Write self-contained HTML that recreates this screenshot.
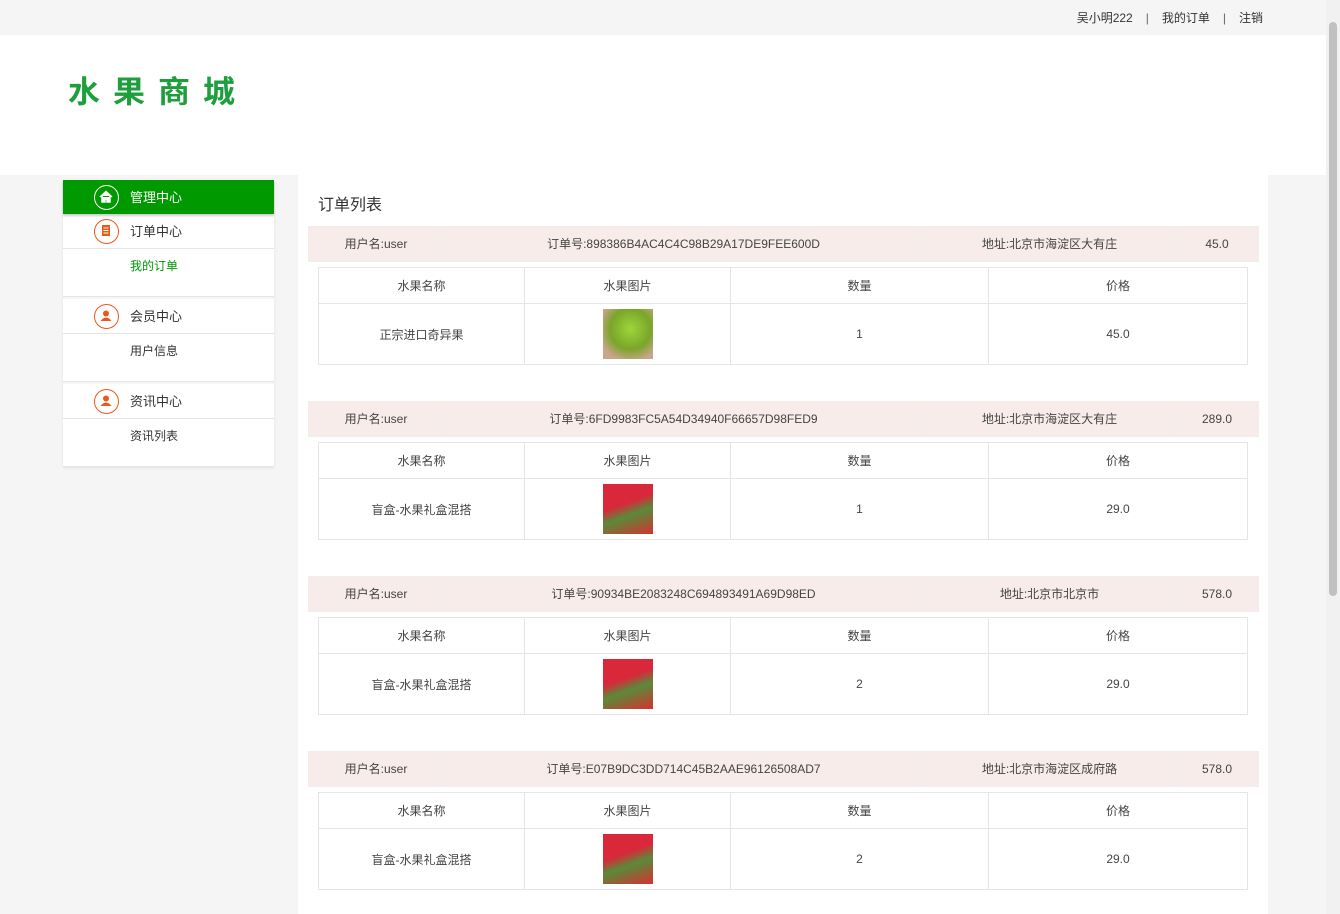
<!DOCTYPE html>
<html><head><meta charset="utf-8"><style>
*{margin:0;padding:0;box-sizing:border-box}
body{width:1340px;height:914px;overflow:hidden;background:#f5f5f5;font-family:"Liberation Sans","Noto Sans CJK SC",sans-serif;font-size:12px;color:#444;position:relative}
.top{height:35px;background:#f5f5f5;position:relative}
.top .l{position:absolute;right:77px;top:9px;font-size:12px;color:#333}
.top .l span{margin:0 13px;color:#666}
.hdr{height:140px;background:#fff;position:relative}
.logo{position:absolute;left:68px;top:31px;font-size:32px;font-weight:bold;color:#1e9e3c;letter-spacing:13px;font-family:"Noto Sans CJK SC",sans-serif;line-height:48px;transform:scaleY(0.95)}
.side{position:absolute;left:63px;top:180px;width:211px;background:#fff;box-shadow:0 1px 3px rgba(0,0,0,.08)}
.it{height:35px;position:relative;border-bottom:1px solid #e5e5e5;font-size:13px;color:#333;line-height:35px;padding-left:67px}
.it.g{background:#009900;color:#fff;border-bottom:none;height:34px;box-shadow:0 2px 2px rgba(0,0,0,.2)}
.ic{position:absolute;left:31px;top:5px;width:25px;height:25px;border-radius:50%;border:1.5px solid #e85a1a;}
.it.g .ic{border-color:#fff}
.sub{height:48px;padding:8px 0 0 67px;font-size:12px;color:#333;border-bottom:1px solid #e5e5e5}
.main{position:absolute;left:298px;top:175px;width:970px;height:739px;background:#fff}
.ttl{position:absolute;left:20px;top:16px;font-size:16px;color:#333}
.blk{position:absolute;left:10px;width:951px}
.hr{height:36px;background:#f7ece9;border:1px solid #eee;display:flex;font-size:12px;color:#444;line-height:34px}
.hr div{text-align:center;border-right:1px solid #eee}
table{position:absolute;left:10px;top:41px;width:930px;border-collapse:collapse;font-size:12px;color:#444}
td{border:1px solid #e5e5e5;text-align:center}
tr.h td{height:36px}
tr.b td{height:61px}
.pic{width:50px;height:50px;display:inline-block;vertical-align:middle}
.sb{position:absolute;right:0;top:0;width:14px;height:914px;background:#f1f1f1}
.sb div{position:absolute;left:3px;top:22px;width:8px;height:574px;background:#c1c1c1;border-radius:4px}
</style></head><body>
<div class="top"><div class="l">吴小明222<span>|</span>我的订单<span>|</span>注销</div></div>
<div class="hdr"><div class="logo">水果商城</div></div>
<div class="side">
<div class="it g"><div class="ic"><svg width="22" height="22" viewBox="0 0 22 22"><path d="M5 11 L11 5.5 L17 11 M7 10 V16 H10 V13 H12 V16 H15 V10" fill="#fff" stroke="#fff" stroke-width="1.5"/></svg></div>管理中心</div>
<div class="it"><div class="ic"><svg width="22" height="22" viewBox="0 0 22 22"><rect x="7" y="5" width="8" height="11" fill="#e85a1a"/><path d="M8.5 8h5M8.5 10.5h5M8.5 13h5" stroke="#fff" stroke-width="1"/></svg></div>订单中心</div>
<div class="sub" style="color:#009900">我的订单</div>
<div style="height:2px;background:#f5f5f5"></div>
<div class="it"><div class="ic"><svg width="22" height="22" viewBox="0 0 22 22"><circle cx="11" cy="8.5" r="3" fill="#e85a1a"/><path d="M5.5 16 Q11 9 16.5 16Z" fill="#e85a1a"/></svg></div>会员中心</div>
<div class="sub">用户信息</div>
<div style="height:2px;background:#f5f5f5"></div>
<div class="it"><div class="ic"><svg width="22" height="22" viewBox="0 0 22 22"><circle cx="11" cy="8.5" r="3" fill="#e85a1a"/><path d="M5.5 16 Q11 9 16.5 16Z" fill="#e85a1a"/></svg></div>资讯中心</div>
<div class="sub">资讯列表</div>
</div>
<div class="main">
<div class="ttl">订单列表</div>

<div class="blk" style="top:51px">
<div class="hr"><div style="width:135px">用户名:user</div><div style="width:480px">订单号:898386B4AC4C4C98B29A17DE9FEE600D</div><div style="width:252px">地址:北京市海淀区大有庄</div><div style="width:82px;border:none">45.0</div></div>
<table><tr class="h"><td style="width:206px">水果名称</td><td style="width:206px">水果图片</td><td style="width:258px">数量</td><td>价格</td></tr>
<tr class="b"><td>正宗进口奇异果</td><td><span class="pic" style="background:radial-gradient(circle at 55% 40%,#9ed63a,#7aa52a 50%,#c9a58a 80%)"></span></td><td>1</td><td>45.0</td></tr></table>
</div>

<div class="blk" style="top:226px">
<div class="hr"><div style="width:135px">用户名:user</div><div style="width:480px">订单号:6FD9983FC5A54D34940F66657D98FED9</div><div style="width:252px">地址:北京市海淀区大有庄</div><div style="width:82px;border:none">289.0</div></div>
<table><tr class="h"><td style="width:206px">水果名称</td><td style="width:206px">水果图片</td><td style="width:258px">数量</td><td>价格</td></tr>
<tr class="b"><td>盲盒-水果礼盒混搭</td><td><span class="pic" style="background:linear-gradient(160deg,#d8283a 40%,#5a8a3a 60%,#d83030)"></span></td><td>1</td><td>29.0</td></tr></table>
</div>

<div class="blk" style="top:401px">
<div class="hr"><div style="width:135px">用户名:user</div><div style="width:480px">订单号:90934BE2083248C694893491A69D98ED</div><div style="width:252px">地址:北京市北京市</div><div style="width:82px;border:none">578.0</div></div>
<table><tr class="h"><td style="width:206px">水果名称</td><td style="width:206px">水果图片</td><td style="width:258px">数量</td><td>价格</td></tr>
<tr class="b"><td>盲盒-水果礼盒混搭</td><td><span class="pic" style="background:linear-gradient(160deg,#d8283a 40%,#5a8a3a 60%,#d83030)"></span></td><td>2</td><td>29.0</td></tr></table>
</div>

<div class="blk" style="top:576px">
<div class="hr"><div style="width:135px">用户名:user</div><div style="width:480px">订单号:E07B9DC3DD714C45B2AAE96126508AD7</div><div style="width:252px">地址:北京市海淀区成府路</div><div style="width:82px;border:none">578.0</div></div>
<table><tr class="h"><td style="width:206px">水果名称</td><td style="width:206px">水果图片</td><td style="width:258px">数量</td><td>价格</td></tr>
<tr class="b"><td>盲盒-水果礼盒混搭</td><td><span class="pic" style="background:linear-gradient(160deg,#d8283a 40%,#5a8a3a 60%,#d83030)"></span></td><td>2</td><td>29.0</td></tr></table>
</div>
</div>
<div class="sb"><div></div></div>
</body></html>
